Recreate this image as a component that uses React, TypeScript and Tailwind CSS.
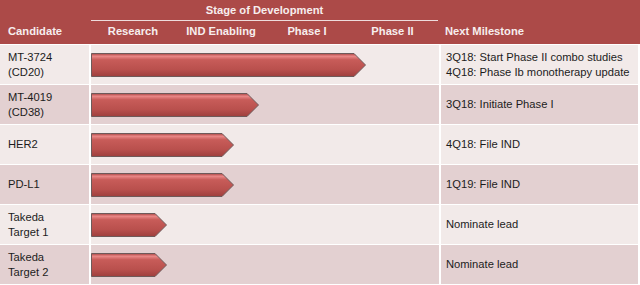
const rows = [
  { name: ['MT-3724', '(CD20)'], bar: 275, milestone: ['3Q18: Start Phase II combo studies', '4Q18: Phase Ib monotherapy update'] },
  { name: ['MT-4019', '(CD38)'], bar: 168, milestone: ['3Q18: Initiate Phase I'] },
  { name: ['HER2'], bar: 143, milestone: ['4Q18: File IND'] },
  { name: ['PD-L1'], bar: 143, milestone: ['1Q19: File IND'] },
  { name: ['Takeda', 'Target 1'], bar: 76, milestone: ['Nominate lead'] },
  { name: ['Takeda', 'Target 2'], bar: 76, milestone: ['Nominate lead'] },
];

const stages = ['Research', 'IND Enabling', 'Phase I', 'Phase II'];

function Arrow({ width, id }: { width: number; id: string }) {
  const h = 24;
  return (
    <svg width={width} height={h} className="block">
      <defs>
        <linearGradient id={id} x1="0" y1="0" x2="0" y2="1">
          <stop offset="0" stopColor="#a84341" />
          <stop offset="0.12" stopColor="#ea8887" />
          <stop offset="0.27" stopColor="#c85c59" />
          <stop offset="0.7" stopColor="#b9504d" />
          <stop offset="1" stopColor="#9e3f3d" />
        </linearGradient>
      </defs>
      <polygon
        points={`0.5,0.5 ${width - 12},0.5 ${width - 0.5},${h / 2} ${width - 12},${h - 0.5} 0.5,${h - 0.5}`}
        fill={`url(#${id})`}
        stroke="#6e5a5a"
        strokeWidth="1"
      />
    </svg>
  );
}

export default function App() {
  return (
    <div className="w-[640px] h-[285px] bg-white text-[11.2px] leading-[15px] overflow-hidden" style={{ fontFamily: '"Liberation Sans", Arial, sans-serif' }}>
      <div className="h-[44px] bg-[#ac4a48] text-[#f7eeee] font-bold grid grid-cols-[91px_347px_1fr] pr-[2px]">
        <div className="flex items-end pl-[8px] pb-[5px]">Candidate</div>
        <div className="flex flex-col">
          <div className="h-[21px] border-b border-[#eedcdc] flex items-center justify-center pt-px">Stage of Development</div>
          <div className="flex-1 grid grid-cols-[84px_92px_80px_1fr] items-end pb-[5px] text-center">
            {stages.map(s => (
              <div key={s}>{s}</div>
            ))}
          </div>
        </div>
        <div className="flex items-end pl-[7px] pb-[5px]">Next Milestone</div>
      </div>
      {rows.map((r, i) => {
        const bg = i % 2 === 0 ? 'bg-[#f2eae9]' : 'bg-[#e3d0d1]';
        return (
          <div key={i} className="h-[40px] grid grid-cols-[89px_348px_1fr] gap-x-[2px] border-t border-white pr-[2px] text-[#1c1c1c]">
            <div className={`flex flex-col justify-center pl-[8px] ${bg}`}>
              {r.name.map(n => (
                <div key={n}>{n}</div>
              ))}
            </div>
            <div className={`flex items-center ${bg}`}>
              <Arrow width={r.bar} id={`g${i}`} />
            </div>
            <div className={`flex flex-col justify-center pl-[5px] ${bg}`}>
              {r.milestone.map(m => (
                <div key={m}>{m}</div>
              ))}
            </div>
          </div>
        );
      })}
    </div>
  );
}
